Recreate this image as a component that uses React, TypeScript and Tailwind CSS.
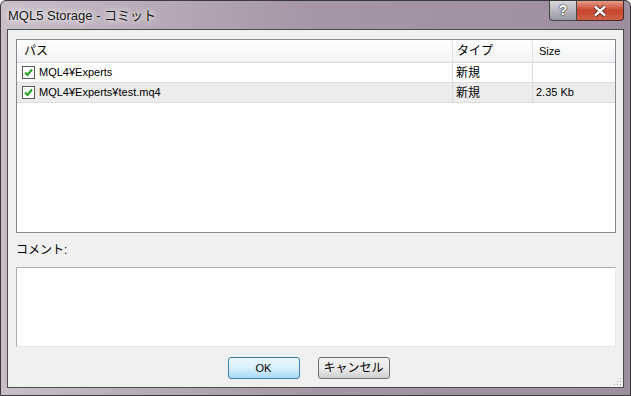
import React from 'react';

const font = { fontFamily: '"Liberation Sans", "Noto Sans CJK JP", sans-serif' };

function Check() {
  return (
    <span className="w-[13px] h-[13px] border border-[#5a5a5a] bg-white flex items-center justify-center shrink-0">
      <svg width="9" height="9" viewBox="0 0 9 9">
        <path d="M1 4.5 L3.5 7 L8 1.5" stroke="#21a121" strokeWidth="2" fill="none" />
      </svg>
    </span>
  );
}

const rows = [
  { path: 'MQL4¥Experts', type: '新規', size: '', bg: 'bg-white' },
  { path: 'MQL4¥Experts¥test.mq4', type: '新規', size: '2.35 Kb', bg: 'bg-[#ececec]' },
];

export default function App() {
  return (
    <div className="w-[631px] h-[396px] text-[11px] text-black" style={font}>
      <div className="w-full h-full flex flex-col border border-[#3a3a3a] rounded-t-[6px] bg-gradient-to-r from-[#c8bec8] via-[#a496a4] to-[#9d8f9f] overflow-hidden">
        {/* title bar */}
        <div className="h-[28px] flex items-start shrink-0">
          <div className="pl-[7px] pt-[5px] text-[13px] text-[#1a1a1a] [text-shadow:0_0_8px_#ffffff,0_0_4px_#ffffff]">
            MQL5 Storage - コミット
          </div>
          <div className="ml-auto mr-[6px] flex h-[20px]">
            <div className="w-[28px] h-full border border-[#4a4a4a] border-t-0 rounded-bl-[4px] bg-gradient-to-b from-[#d8d8dc] to-[#9a98a0] flex items-center justify-center">
              <span className="text-white font-bold text-[14px] [text-shadow:0_0_2px_#333,0_0_1px_#000]">?</span>
            </div>
            <div className="w-[47px] h-full border border-[#4a2a2a] border-t-0 border-l-0 rounded-br-[4px] bg-gradient-to-b from-[#e69a86] via-[#c6452c] to-[#d06048] flex items-center justify-center">
              <svg width="16" height="12" viewBox="0 0 16 12">
                <path d="M3 1.5 L13 10.5 M13 1.5 L3 10.5" stroke="#3a2020" strokeWidth="4" />
                <path d="M3 1.5 L13 10.5 M13 1.5 L3 10.5" stroke="#ffffff" strokeWidth="2.4" />
              </svg>
            </div>
          </div>
        </div>
        {/* client */}
        <div className="flex-1 mx-[6px] mb-[7px] border border-[#4f4a52] bg-[#f0f0f0] flex flex-col pl-[8px] pr-[7px] pt-[9px] relative">
          <div className="h-[194px] border border-[#828790] bg-white flex flex-col">
            <div className="h-[23px] flex border-b border-[#d5d5d5] bg-gradient-to-b from-white to-[#f1f2f4] text-[12px]">
              <div className="w-[436px] pl-[7px] flex items-center border-r border-[#e3e4e6]">パス</div>
              <div className="w-[80px] pl-[4px] flex items-center border-r border-[#e3e4e6]">タイプ</div>
              <div className="w-[80px] pl-[6px] flex items-center text-[11px]">Size</div>
            </div>
            {rows.map((r) => (
              <div key={r.path} className={`h-[20px] flex border-b border-[#dcdcdc] ${r.bg}`}>
                <div className="w-[436px] pl-[5px] flex items-center gap-[4px] border-r border-[#dcdcdc]">
                  <Check />
                  <span>{r.path}</span>
                </div>
                <div className="w-[80px] pl-[3px] flex items-center border-r border-[#dcdcdc] text-[12px]">{r.type}</div>
                <div className="w-[80px] pl-[3px] flex items-center">{r.size}</div>
              </div>
            ))}
          </div>
          <div className="h-[34px] flex items-center text-[12px]">コメント:</div>
          <div className="h-[80px] border border-[#abadb3] border-b-[#e3e9ef] border-r-[#e3e9ef] bg-white" />
          <div className="flex justify-center gap-[18px] pt-[10px] pr-[15px]">
            <button className="w-[72px] h-[22px] rounded-[3px] border border-[#3c7fb1] bg-gradient-to-b from-[#eaf6fd] via-[#d9f0fc] to-[#a7d9f5] text-[11px]">
              OK
            </button>
            <button className="w-[72px] h-[22px] rounded-[3px] border border-[#707070] bg-gradient-to-b from-[#f2f2f2] via-[#ebebeb] to-[#cfcfcf] text-[12px]">
              キャンセル
            </button>
          </div>
          <svg className="absolute right-[1px] bottom-[1px]" width="10" height="10" viewBox="0 0 10 10">
            {[[8, 2], [8, 5], [5, 5], [8, 8], [5, 8], [2, 8]].map(([x, y]) => (
              <rect key={`${x}-${y}`} x={x} y={y} width="1" height="1" fill="#a0a0a0" />
            ))}
          </svg>
        </div>
      </div>
    </div>
  );
}
